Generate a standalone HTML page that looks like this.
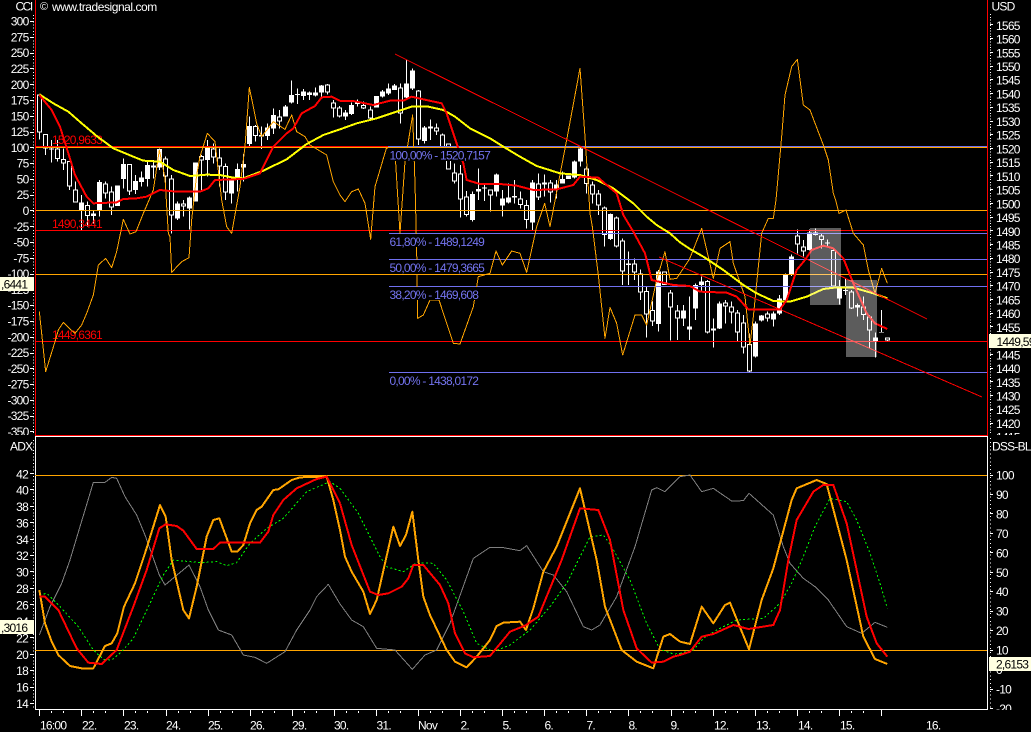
<!DOCTYPE html>
<html><head><meta charset="utf-8"><title>Chart</title>
<style>
html,body{margin:0;padding:0;background:#000;width:1031px;height:732px;overflow:hidden}
svg{display:block;position:absolute;left:0;top:0}
text{font-family:"Liberation Sans",Arial,sans-serif;font-size:12px;letter-spacing:-.75px;fill:#fff}
.w{fill:none;stroke:#fff;stroke-width:3;shape-rendering:crispEdges}
.b{fill:none;stroke:#fff;stroke-width:15;shape-rendering:crispEdges}
.h{fill:none;stroke:#000;stroke-width:9;shape-rendering:crispEdges}
.l{fill:none;stroke-linejoin:round;shape-rendering:crispEdges}
.cci{stroke:#ffa500;stroke-width:3}
.yel{stroke:#ff0;stroke-width:6}
.red{stroke:#f00;stroke-width:6}
.ora{stroke:#ffa500;stroke-width:6}
.gry{stroke:#808080;stroke-width:3}
.grn{stroke:#0f0;stroke-width:3;stroke-dasharray:6 7}
.tk{fill:none;stroke:#fff;stroke-width:1;shape-rendering:crispEdges}
.f{fill:#7474f0}
</style></head><body>
<svg width="1031" height="732" viewBox="0 0 1031 732" xmlns="http://www.w3.org/2000/svg">
<rect width="1031" height="732" fill="#000"/>

<!-- candles -->
<g transform="scale(.33333)">
<path class="w" d="M118 283V418M136 402V465M154 420V488M172 420V485M190 445V510M208 483V570M226 545V607M244 585V690M262 605V680M280 630V670M298 540V650M316 545V595M334 560V645M352 556V618M370 475V565M388 492V585M406 525V582M424 515V560M442 480V560M460 480V535M478 445V510M496 470V560M514 525V700M532 605V660M550 600V650M568 590V688M586 487V605M604 465V570M622 420V530M640 430V490M658 445V560M676 490V600M694 530V610M712 490V575M730 462V545M748 350V440M766 375V425M784 380V447M802 370V420M820 325V402M838 330V385M856 315V350M874 242V310M892 265V312M910 267V300M928 275V300M946 262V290M964 255V290M982 252V283M1000 300V352M1018 318V352"/>
<path class="b" d="M118 283V398M136 402V445M154 445V448M172 445V477M190 477V490M208 483V560M226 568V607M244 608V630M262 615V648M280 640V648M298 546V633M316 550V580M334 575V623M352 556V618M370 492V537M388 492V575M406 543V570M424 533V546M442 495V537M460 496V503M478 447V503M496 475V530M514 535V647M532 610V655M550 610V620M568 592V625M586 487V605M604 468V482M622 440V480M640 445V473M658 472V500M676 498V578M694 540V580M712 507V533M730 492V503M748 378V432M766 378V408M784 405V410M802 382V408M820 345V385M838 349V365M856 320V349M874 285V308M892 282V285M910 275V288M928 278V285M946 277V287M964 256V278M982 253V278M1000 307V325M1018 322V350"/>
<path class="h" d="M118 286V395M136 405V442M172 448V474M190 480V487M208 486V557M226 571V604M262 618V645M316 553V577M334 578V620M388 495V572M460 499V500M496 478V527M514 538V644M550 613V617M604 471V479M640 448V470M658 475V497M676 501V575M766 381V405M838 352V362M982 256V275M1000 310V322M1018 325V347"/>
</g>
<g transform="translate(340,40) scale(.33333)">
<path class="w" d="M16 210V240M34 188V225M52 178V200M70 185V207M91 200V240M109 168V202M127 150V172M145 130V165M163 132V150M181 130V250M199 60V175M217 85V150M235 150V315M253 258V310M271 238V300M289 250V285M307 280V350M325 310V388M343 370V430M361 375V532M379 453V530M397 455V545M415 385V480M433 435V483M451 448V515M469 400V470M487 450V530M505 430V490M523 420V490M541 455V505M559 480V565M577 420V570M595 400V480M613 403V470M631 420V488M649 420V475M667 395V430M685 407V417M703 362V415M721 318V380M739 380V460M757 425V490M775 450V525M793 500V620M811 520V600M829 530V622M847 595V735M865 635V735M883 655V720M901 688V780M919 740V892M937 783V858M955 690V875M973 695V735M991 750V902M1012 795V900M1030 795V858M1048 770V900"/>
<path class="b" d="M16 218V230M34 195V222M52 188V192M70 195V205M91 208V235M109 168V202M127 155V170M145 145V160M163 137V150M181 142V220M199 130V172M217 92V146M235 152V298M253 262V303M271 260V266M289 262V275M307 283V340M325 310V388M343 398V425M361 400V478M379 470V525M397 462V540M415 447V455M433 442V445M451 448V467M469 403V455M487 475V497M505 472V488M523 468V472M541 475V495M559 495V540M577 427V548M595 430V472M613 427V433M631 428V458M649 433V445M667 417V430M685 407V417M703 365V413M721 325V365M739 385V432M757 433V463M775 460V497M793 503V585M811 522V597M829 532V620M847 602V695M865 670V675M883 670V698M901 700V758M919 753V823M937 810V845M955 695V852M973 695V735M991 757V802M1012 812V836M1030 812V835M1048 860V868"/>
<path class="h" d="M70 198V202M91 211V232M181 145V217M235 155V295M289 265V272M307 286V337M325 313V385M343 401V422M361 403V475M379 473V522M451 451V464M541 478V492M559 498V537M595 433V469M631 431V455M739 388V429M757 436V460M775 463V494M793 506V582M829 535V617M847 605V692M883 673V695M901 703V755M919 756V820M937 813V842M973 698V732M991 760V799M1012 815V833"/>
</g>
<g transform="translate(690,200) scale(.33333)">
<path class="w" d="M16 250V360M34 230V275M52 240V400M70 355V443M88 305V387M106 300V370M124 305V370M142 330V425M160 345V460M178 400V517M196 365V472M214 345V365M232 335V365M250 335V380M268 285V345M286 220V302M304 163V228M322 88V160M340 120V170M358 88V152M376 85V107M394 100V145M412 118V140M430 145V260M448 240V313M466 237V285M484 270V327M502 310V350M520 290V360M538 345V445M556 397V472M574 330V398M592 412V424"/>
<path class="b" d="M16 255V325M34 245V255M52 243V398M70 385V392M88 310V385M106 308V320M124 320V338M142 337V397M160 367V443M178 432V515M196 370V470M214 347V362M232 340V355M250 340V358M268 295V340M286 225V300M304 170V225M322 107V133M340 140V155M358 97V150M376 98V105M394 107V120M412 128V131M430 150V260M448 260V296M466 270V273M484 275V325M502 315V323M520 320V345M538 350V391M556 412V426M574 396V398M592 412V422"/>
<path class="h" d="M52 246V395M106 311V317M124 323V335M142 340V394M160 370V440M178 435V512M232 343V352M322 110V130M340 143V152M376 101V102M394 110V117M430 153V257M484 278V322M520 323V342M538 353V388M592 415V419"/>
</g>

<!-- red labels (under the lines) -->
<text x="52" y="144" style="fill:#f00">1520,9633</text>
<text x="52" y="228" style="fill:#f00">1490,3441</text>
<text x="52" y="339" style="fill:#f00">1449,6361</text>

<!-- horizontal lines -->
<g shape-rendering="crispEdges">
<rect x="35" y="146" width="353" height="1" fill="#f00"/>
<rect x="388" y="146" width="599" height="1" fill="#7070f0"/>
<rect x="35" y="147" width="952" height="1" fill="#ffa500"/>
<rect x="35" y="210" width="952" height="1" fill="#ffa500"/>
<rect x="35" y="230" width="952" height="1" fill="#f00"/>
<rect x="389" y="233" width="598" height="1" fill="#7070f0"/>
<rect x="389" y="259" width="598" height="1" fill="#7070f0"/>
<rect x="35" y="274" width="952" height="1" fill="#ffa500"/>
<rect x="389" y="286" width="598" height="1" fill="#7070f0"/>
<rect x="35" y="341" width="952" height="1" fill="#f00"/>
<rect x="389" y="372" width="598" height="1" fill="#7070f0"/>
</g>

<!-- CCI thin orange -->
<g transform="scale(.33333)"><polyline class="l cci" points="118,935 125,1000 137,1115 165,1025 175,990 190,967 210,987 225,1000 245,975 260,940 280,885 295,795 317,775 335,803 350,755 370,658 390,702 408,695 430,640 460,570 478,450 495,535 505,700 510,710 515,817 545,785 567,773 575,660 590,525 600,470 622,400 645,425 665,600 680,680 695,700 720,560 735,440 748,262 770,370 785,410 820,365 855,388 875,345 890,395 915,410 930,435 980,465 1000,545 1020,585"/></g>
<g transform="translate(340,40) scale(.33333)"><polyline class="l cci" points="0,465 15,485 35,455 55,447 75,490 92,598 105,440 140,322 165,337 180,580 195,365 218,225 225,430 230,630 233,835 250,825 270,780 297,780 340,910 360,912 400,800 415,710 450,700 468,633 487,675 515,633 540,640 560,697 590,560 614,490 630,560 680,300 720,85 735,290 750,520 757,560 775,705 795,895 810,802 830,850 848,945 885,825 905,825 920,855 950,720 975,635 990,718 1010,715 1050,655"/></g>
<g transform="translate(690,200) scale(.33333)"><polyline class="l cci" points="0,174 35,85 70,235 90,145 120,125 130,190 165,290 180,435 190,350 215,100 235,55 250,55 258,0 275,-190 285,-315 305,-400 322,-422 340,-285 360,-270 400,-165 415,-120 430,-20 437,0 447,40 468,30 490,100 520,135 535,210 555,280 575,205 592,250"/></g>

<!-- yellow -->
<g transform="scale(.33333)"><polyline class="l yel" points="118,283 160,310 205,335 245,370 290,408 340,445 400,470 430,482 480,485 520,510 570,528 620,524 660,525 700,533 730,535 790,512 860,478 920,432 970,405 1020,388"/></g>
<g transform="translate(340,40) scale(.33333)"><polyline class="l yel" points="0,268 50,250 110,235 170,215 215,200 265,200 310,210 345,230 390,265 450,295 490,320 540,350 590,378 660,400 720,405 770,420 820,445 880,490 920,530 950,555 990,580 1020,607"/></g>
<g transform="translate(690,200) scale(.33333)"><polyline class="l yel" points="-30,127 0,147 40,170 100,210 160,255 200,280 250,303 300,305 350,290 400,267 440,262 490,263 550,280 592,295"/></g>

<!-- red -->
<g transform="scale(.33333)"><polyline class="l red" points="118,285 155,330 180,380 205,460 225,525 260,590 280,610 350,607 370,597 410,595 440,590 480,570 530,575 600,575 625,565 645,540 730,537 780,520 800,480 820,440 860,400 880,385 905,340 945,318 965,292 995,290 1020,303"/></g>
<g transform="translate(340,40) scale(.33333)"><polyline class="l red" points="0,183 40,183 100,195 150,182 190,182 215,170 250,178 305,190 320,220 350,310 370,370 380,420 420,432 480,432 530,437 580,450 650,448 700,435 720,410 775,413 800,435 830,460 850,525 880,575 915,640 935,720 1000,735 1050,738"/></g>
<g transform="translate(690,200) scale(.33333)"><polyline class="l red" points="0,258 30,275 110,278 140,290 175,328 270,328 290,300 320,210 345,180 365,150 400,137 430,145 460,175 490,250 530,340 555,370 592,387"/></g>

<!-- trendlines -->
<path d="M395 54L927 319M659 257L982 397" fill="none" stroke="#f00" stroke-width="1" shape-rendering="crispEdges"/>

<!-- fib labels with black background, on top of lines -->
<g fill="#000" shape-rendering="crispEdges">
<rect x="388" y="148" width="103" height="13"/>
<rect x="389" y="234" width="95" height="13"/>
<rect x="389" y="260" width="95" height="14"/>
<rect x="389" y="287" width="89" height="13"/>
<rect x="389" y="373" width="89" height="13"/>
</g>
<text class="f" x="389.5" y="159.5">100,00% - 1520,7157</text>
<text class="f" x="389.5" y="246">61,80% - 1489,1249</text>
<text class="f" x="389.5" y="272">50,00% - 1479,3665</text>
<text class="f" x="389.5" y="299">38,20% - 1469,608</text>
<text class="f" x="389.5" y="385">0,00% - 1438,0172</text>

<!-- translucent boxes -->
<rect x="810" y="228" width="31" height="77" fill="#fff" opacity=".36"/>
<rect x="846" y="280" width="31" height="77" fill="#fff" opacity=".36"/>

<!-- top-left caption -->
<text x="15.5" y="10.5" style="letter-spacing:-1.5px">CCI</text>
<text x="40" y="10" style="font-size:11px;letter-spacing:0">©</text>
<text x="52" y="11" style="letter-spacing:-.45px">www.tradesignal.com</text>
<text x="991.5" y="10.5">USD</text>

<!-- CCI axis -->
<g text-anchor="end">
<text x="28.5" y="25.6">300</text><text x="28.5" y="41.4">275</text><text x="28.5" y="57.2">250</text><text x="28.5" y="73">225</text><text x="28.5" y="88.8">200</text><text x="28.5" y="104.6">175</text><text x="28.5" y="120.3">150</text><text x="28.5" y="136.1">125</text><text x="28.5" y="151.9">100</text><text x="28.5" y="167.7">75</text><text x="28.5" y="183.5">50</text><text x="28.5" y="199.2">25</text><text x="28.5" y="215">0</text><text x="28.5" y="230.8">-25</text><text x="28.5" y="246.6">-50</text><text x="28.5" y="262.4">-75</text><text x="28.5" y="278.2">-100</text><text x="28.5" y="293.9">-125</text><text x="28.5" y="309.7">-150</text><text x="28.5" y="325.5">-175</text><text x="28.5" y="341.3">-200</text><text x="28.5" y="357.1">-225</text><text x="28.5" y="372.9">-250</text><text x="28.5" y="388.6">-275</text><text x="28.5" y="404.4">-300</text><text x="28.5" y="420.2">-325</text><text x="28.5" y="436">-350</text>
</g>
<path class="tk" d="M30 21.5H34M30 37.5H34M30 53.5H34M30 68.5H34M30 84.5H34M30 100.5H34M30 116.5H34M30 132.5H34M30 147.5H34M30 163.5H34M30 179.5H34M30 195.5H34M30 210.5H34M30 226.5H34M30 242.5H34M30 258.5H34M30 274.5H34M30 289.5H34M30 305.5H34M30 321.5H34M30 337.5H34M30 353.5H34M30 368.5H34M30 384.5H34M30 400.5H34M30 416.5H34M30 431.5H34"/>
<path d="M33.5 15V434" fill="none" stroke="#fff" stroke-dasharray="1 2.16" shape-rendering="crispEdges"/>

<!-- price axis -->
<text x="996" y="30">1565</text><text x="996" y="43.5">1560</text><text x="996" y="57.3">1555</text><text x="996" y="71">1550</text><text x="996" y="84.7">1545</text><text x="996" y="98.5">1540</text><text x="996" y="112.2">1535</text><text x="996" y="125.9">1530</text><text x="996" y="139.6">1525</text><text x="996" y="153.4">1520</text><text x="996" y="167.1">1515</text><text x="996" y="180.8">1510</text><text x="996" y="194.6">1505</text><text x="996" y="208.3">1500</text><text x="996" y="222">1495</text><text x="996" y="235.8">1490</text><text x="996" y="249.5">1485</text><text x="996" y="263.2">1480</text><text x="996" y="276.9">1475</text><text x="996" y="290.7">1470</text><text x="996" y="304.4">1465</text><text x="996" y="318.1">1460</text><text x="996" y="331.9">1455</text><text x="996" y="359.3">1445</text><text x="996" y="373">1440</text><text x="996" y="386.8">1435</text><text x="996" y="400.5">1430</text><text x="996" y="414.2">1425</text><text x="996" y="428">1420</text><text x="996" y="441.7">1415</text>
<path class="tk" d="M990 24.5H993M990 38.5H993M990 52.5H993M990 66.5H993M990 79.5H993M990 93.5H993M990 107.5H993M990 121.5H993M990 134.5H993M990 148.5H993M990 162.5H993M990 175.5H993M990 189.5H993M990 203.5H993M990 217.5H993M990 230.5H993M990 244.5H993M990 258.5H993M990 272.5H993M990 285.5H993M990 299.5H993M990 313.5H993M990 326.5H993M990 340.5H993M990 354.5H993M990 368.5H993M990 381.5H993M990 395.5H993M990 409.5H993M990 423.5H993"/>
<path d="M990.5 14V434" fill="none" stroke="#fff" stroke-dasharray="1 1.75" shape-rendering="crispEdges"/>

<!-- lower panel -->
<rect x="0" y="435" width="1031" height="297" fill="#000"/>
<g shape-rendering="crispEdges">
<rect x="35" y="435" width="953" height="1" fill="#f00"/>
<rect x="35" y="436" width="953" height="1" fill="#fff"/>
<rect x="35" y="0" width="1" height="436" fill="#f00"/>
<rect x="987" y="0" width="1" height="436" fill="#f00"/>
<rect x="35" y="436" width="1" height="274" fill="#fff"/>
<rect x="987" y="436" width="1" height="274" fill="#fff"/>
<rect x="35" y="709" width="953" height="1" fill="#fff"/>
<rect x="35" y="475" width="952" height="1" fill="#ffa500"/>
<rect x="35" y="650" width="952" height="1" fill="#ffa500"/>
</g>

<text x="10" y="450.5">ADX</text>
<text x="992" y="450.5">DSS-BLA</text>

<g text-anchor="end">
<text x="28" y="478.5">42</text><text x="28" y="494.5">40</text><text x="28" y="511.2">38</text><text x="28" y="527.5">36</text><text x="28" y="543.8">34</text><text x="28" y="560.1">32</text><text x="28" y="576.5">30</text><text x="28" y="592.9">28</text><text x="28" y="609.3">26</text><text x="28" y="625.8">24</text><text x="28" y="642.3">22</text><text x="28" y="658.8">20</text><text x="28" y="675.2">18</text><text x="28" y="691.7">16</text><text x="28" y="708.1">14</text>
</g>
<path class="tk" d="M30 473.5H34M30 489.5H34M30 506.5H34M30 522.5H34M30 539.5H34M30 555.5H34M30 571.5H34M30 588.5H34M30 604.5H34M30 621.5H34M30 637.5H34M30 654.5H34M30 670.5H34M30 687.5H34M30 703.5H34"/>
<path d="M33.5 440V708" fill="none" stroke="#fff" stroke-dasharray="1 2.29" shape-rendering="crispEdges"/>

<text x="996" y="479.5">100</text><text x="996" y="499">90</text><text x="996" y="518.4">80</text><text x="996" y="537.9">70</text><text x="996" y="557.3">60</text><text x="996" y="576.8">50</text><text x="996" y="596.2">40</text><text x="996" y="615.7">30</text><text x="996" y="635.1">20</text><text x="996" y="654.5">10</text><text x="996" y="674">0</text><text x="996" y="693.5">-10</text><text x="996" y="712.9">-20</text>
<path class="tk" d="M990 475.5H993M990 494.5H993M990 513.5H993M990 533.5H993M990 552.5H993M990 572.5H993M990 591.5H993M990 611.5H993M990 630.5H993M990 650.5H993M990 669.5H993M990 689.5H993M990 708.5H993"/>
<path d="M990.5 438V708" fill="none" stroke="#fff" stroke-dasharray="1 2.89" shape-rendering="crispEdges"/>

<!-- lower lines -->
<g transform="translate(0,460) scale(.33333)">
<polyline class="l gry" points="118,525 150,440 185,370 210,300 240,200 280,67 315,67 335,52 350,55 375,110 410,165 435,225 478,345 495,375 567,315 600,380 625,450 655,510 695,525 730,585 765,592 800,610 855,575 890,510 930,450 950,410 985,373 1020,432"/>
<polyline class="l grn" points="118,405 140,400 180,440 235,500 280,570 310,598 335,600 365,575 400,535 450,430 490,345 520,300 600,308 650,305 680,317 710,308 750,250 800,205 850,175 920,95 990,65 1020,85"/>
<polyline class="l ora" points="118,390 135,490 155,545 175,585 210,618 245,625 280,625 315,558 335,550 352,520 372,440 405,370 435,280 480,135 497,170 515,300 550,450 567,475 590,380 620,230 640,180 658,175 695,275 712,275 730,255 750,190 770,150 785,140 820,90 835,88 875,60 900,52 980,50 1000,120 1020,210"/>
<polyline class="l red" points="118,410 135,410 175,450 230,565 265,608 305,612 350,570 400,440 440,330 478,205 497,193 530,198 550,212 590,267 640,267 660,248 780,248 805,215 820,165 850,120 890,85 950,57 980,50 1020,130"/>
</g>
<g transform="translate(340,460) scale(.33333)">
<polyline class="l gry" points="0,432 35,480 70,500 110,565 165,570 217,628 255,585 290,570 330,490 400,295 450,262 490,263 540,272 560,257 610,335 640,345 680,395 730,500 755,510 780,495 830,410 885,260 935,90 950,83 975,95 1020,50"/>
<polyline class="l grn" points="0,85 55,160 120,290 140,320 190,335 230,308 280,310 320,360 370,455 410,550 460,575 510,555 570,510 630,440 680,370 750,230 790,225 815,260 870,360 920,490 960,568 1000,582 1020,580"/>
<polyline class="l ora" points="0,210 15,290 35,335 70,395 90,462 110,420 160,200 180,258 198,225 217,155 235,300 250,410 270,465 320,570 345,605 380,622 410,590 450,540 470,498 490,488 540,485 558,510 580,445 610,335 650,260 720,85 770,300 795,440 845,570 890,605 940,625 970,530 990,522 1020,545"/>
<polyline class="l red" points="0,130 35,255 90,395 115,405 145,400 185,380 205,355 220,315 250,315 300,375 325,430 345,520 375,580 400,592 450,588 510,515 555,497 595,470 665,300 720,145 775,150 810,240 850,450 890,565 935,608 970,605 1000,590 1020,585"/>
</g>
<g transform="translate(680,460) scale(.33333)">
<polyline class="l gry" points="0,50 30,45 65,95 100,85 155,123 190,122 207,100 280,165 310,260 330,310 370,355 405,380 445,420 500,500 545,520 585,487 622,502"/>
<polyline class="l grn" points="0,580 40,570 70,535 110,510 170,480 200,478 250,475 300,430 335,370 370,290 405,200 450,115 500,125 530,180 570,280 600,370 622,445"/>
<polyline class="l ora" points="0,545 30,552 65,440 100,490 135,435 150,428 207,568 245,420 280,325 335,120 350,85 410,60 440,72 500,300 550,530 585,597 622,612"/>
<polyline class="l red" points="0,585 30,575 65,530 100,522 160,495 205,507 280,495 300,450 325,300 350,180 400,95 430,75 460,75 500,190 560,470 590,550 622,590"/>
</g>

<!-- time axis -->
<rect x="0" y="710" width="1031" height="22" fill="#000"/>
<rect x="35" y="709" width="953" height="1" fill="#fff" shape-rendering="crispEdges"/>
<path class="tk" d="M39.5 710V716M81.5 710V716M123.5 710V716M166.5 710V716M208.5 710V716M250.5 710V716M292.5 710V716M334.5 710V716M376.5 710V716M418.5 710V716M460.5 710V716M502.5 710V716M544.5 710V716M586.5 710V716M628.5 710V716M671.5 710V716M713.5 710V716M755.5 710V716M797.5 710V716M839.5 710V716M881.5 710V716"/>
<path class="tk" d="M51.5 711V713M63.5 711V713M93.5 711V713M105.5 711V713M135.5 711V713M147.5 711V713M178.5 711V713M190.5 711V713M220.5 711V713M232.5 711V713M262.5 711V713M274.5 711V713M304.5 711V713M316.5 711V713M346.5 711V713M358.5 711V713M388.5 711V713M400.5 711V713M430.5 711V713M442.5 711V713M472.5 711V713M484.5 711V713M514.5 711V713M526.5 711V713M556.5 711V713M568.5 711V713M598.5 711V713M610.5 711V713M640.5 711V713M652.5 711V713M683.5 711V713M695.5 711V713M725.5 711V713M737.5 711V713M767.5 711V713M779.5 711V713M809.5 711V713M821.5 711V713M851.5 711V713M863.5 711V713"/>
<text x="40" y="729.5">16:00</text><text x="82" y="729.5">22.</text><text x="124" y="729.5">23.</text><text x="166" y="729.5">24.</text><text x="208" y="729.5">25.</text><text x="250" y="729.5">26.</text><text x="292" y="729.5">29.</text><text x="334" y="729.5">30.</text><text x="376.5" y="729.5">31.</text><text x="418" y="729.5">Nov</text><text x="460.5" y="729.5">2.</text><text x="502.5" y="729.5">5.</text><text x="544.5" y="729.5">6.</text><text x="586.5" y="729.5">7.</text><text x="628.5" y="729.5">8.</text><text x="670.5" y="729.5">9.</text><text x="714" y="729.5">12.</text><text x="756" y="729.5">13.</text><text x="798" y="729.5">14.</text><text x="840" y="729.5">15.</text><text x="926" y="729.5">16.</text>

<!-- tags -->
<g shape-rendering="crispEdges">
<rect x="0" y="277" width="34" height="14" fill="#ffffe1"/>
<rect x="989" y="334" width="42" height="14" fill="#ffffe1"/>
<rect x="0" y="620" width="34" height="14" fill="#ffffe1"/>
<rect x="989" y="657" width="42" height="14" fill="#ffffe1"/>
</g>
<text x="1" y="288.5" style="fill:#000">,6441</text>
<text x="996.5" y="346" style="fill:#000">1449,59</text>
<text x="1" y="632" style="fill:#000">,3016</text>
<text x="996" y="668.5" style="fill:#000">2,6153</text>
</svg>
</body></html>
